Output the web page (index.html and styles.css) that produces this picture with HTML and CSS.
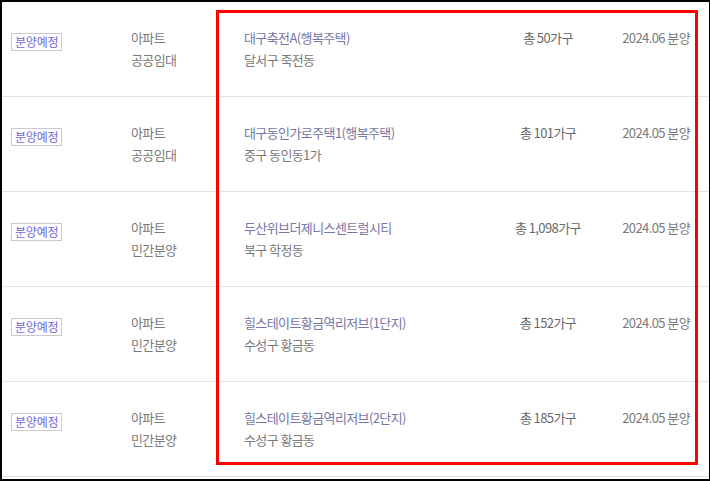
FILE: index.html
```html
<!DOCTYPE html>
<html>
<head>
    <meta charset="UTF-8">
    <meta name="viewport" content="width=device-width, initial-scale=1.0">
    <title>분양 일정</title>
    <link rel="stylesheet" href="styles.css">
</head>
<body>
    <div class="frame">
        <ul class="list">
            <li class="row">
                <div class="badge-cell"><span class="badge">분양예정</span></div>
                <div class="type"><p>아파트</p><p>공공임대</p></div>
                <div class="name"><p class="title">대구축전A(행복주택)</p><p>달서구 죽전동</p></div>
                <div class="count">총 50가구</div>
                <div class="date">2024.06 분양</div>
            </li>
            <li class="row">
                <div class="badge-cell"><span class="badge">분양예정</span></div>
                <div class="type"><p>아파트</p><p>공공임대</p></div>
                <div class="name"><p class="title">대구동인가로주택1(행복주택)</p><p>중구 동인동1가</p></div>
                <div class="count">총 101가구</div>
                <div class="date">2024.05 분양</div>
            </li>
            <li class="row">
                <div class="badge-cell"><span class="badge">분양예정</span></div>
                <div class="type"><p>아파트</p><p>민간분양</p></div>
                <div class="name"><p class="title">두산위브더제니스센트럴시티</p><p>북구 학정동</p></div>
                <div class="count">총 1,098가구</div>
                <div class="date">2024.05 분양</div>
            </li>
            <li class="row">
                <div class="badge-cell"><span class="badge">분양예정</span></div>
                <div class="type"><p>아파트</p><p>민간분양</p></div>
                <div class="name"><p class="title">힐스테이트황금역리저브(1단지)</p><p>수성구 황금동</p></div>
                <div class="count">총 152가구</div>
                <div class="date">2024.05 분양</div>
            </li>
            <li class="row">
                <div class="badge-cell"><span class="badge">분양예정</span></div>
                <div class="type"><p>아파트</p><p>민간분양</p></div>
                <div class="name"><p class="title">힐스테이트황금역리저브(2단지)</p><p>수성구 황금동</p></div>
                <div class="count">총 185가구</div>
                <div class="date">2024.05 분양</div>
            </li>
        </ul>
        <div class="highlight"></div>
    </div>
</body>
</html>
```

FILE: styles.css
```css
* {
    padding: 0;
    margin: 0;
    box-sizing: border-box;
}
body {
    background: #fff;
    font-family: "Noto Sans CJK KR", "Noto Sans", sans-serif;
    font-size: 13px;
    color: #7a7a7a;
}
.frame {
    position: relative;
    width: 710px;
    height: 481px;
    border: 2px solid #000;
    border-right-width: 1px;
    overflow: hidden;
}
.list {
    list-style: none;
}
.row {
    display: grid;
    grid-template-columns: 120px 113px 254px 100px 1fr;
    height: 95px;
    padding: 25px 19px 0 9px;
    border-bottom: 1px solid #e3e3e3;
    line-height: 22px;
    letter-spacing: -0.6px;
}
.badge-cell {
    padding-top: 4px;
}
.badge {
    display: inline-block;
    height: 18px;
    padding: 0 3px;
    border: 1px solid #c9c9d2;
    font-size: 12px;
    line-height: 16px;
    color: #7467e0;
    letter-spacing: -0.2px;
}
.title {
    color: #7676a6;
}
.count {
    text-align: center;
    color: #6a6a6a;
}
.date {
    text-align: right;
    color: #7a7a7a;
}
.highlight {
    position: absolute;
    left: 214px;
    top: 8px;
    width: 482px;
    height: 455px;
    border: 3px solid #ff0000;
}
```
